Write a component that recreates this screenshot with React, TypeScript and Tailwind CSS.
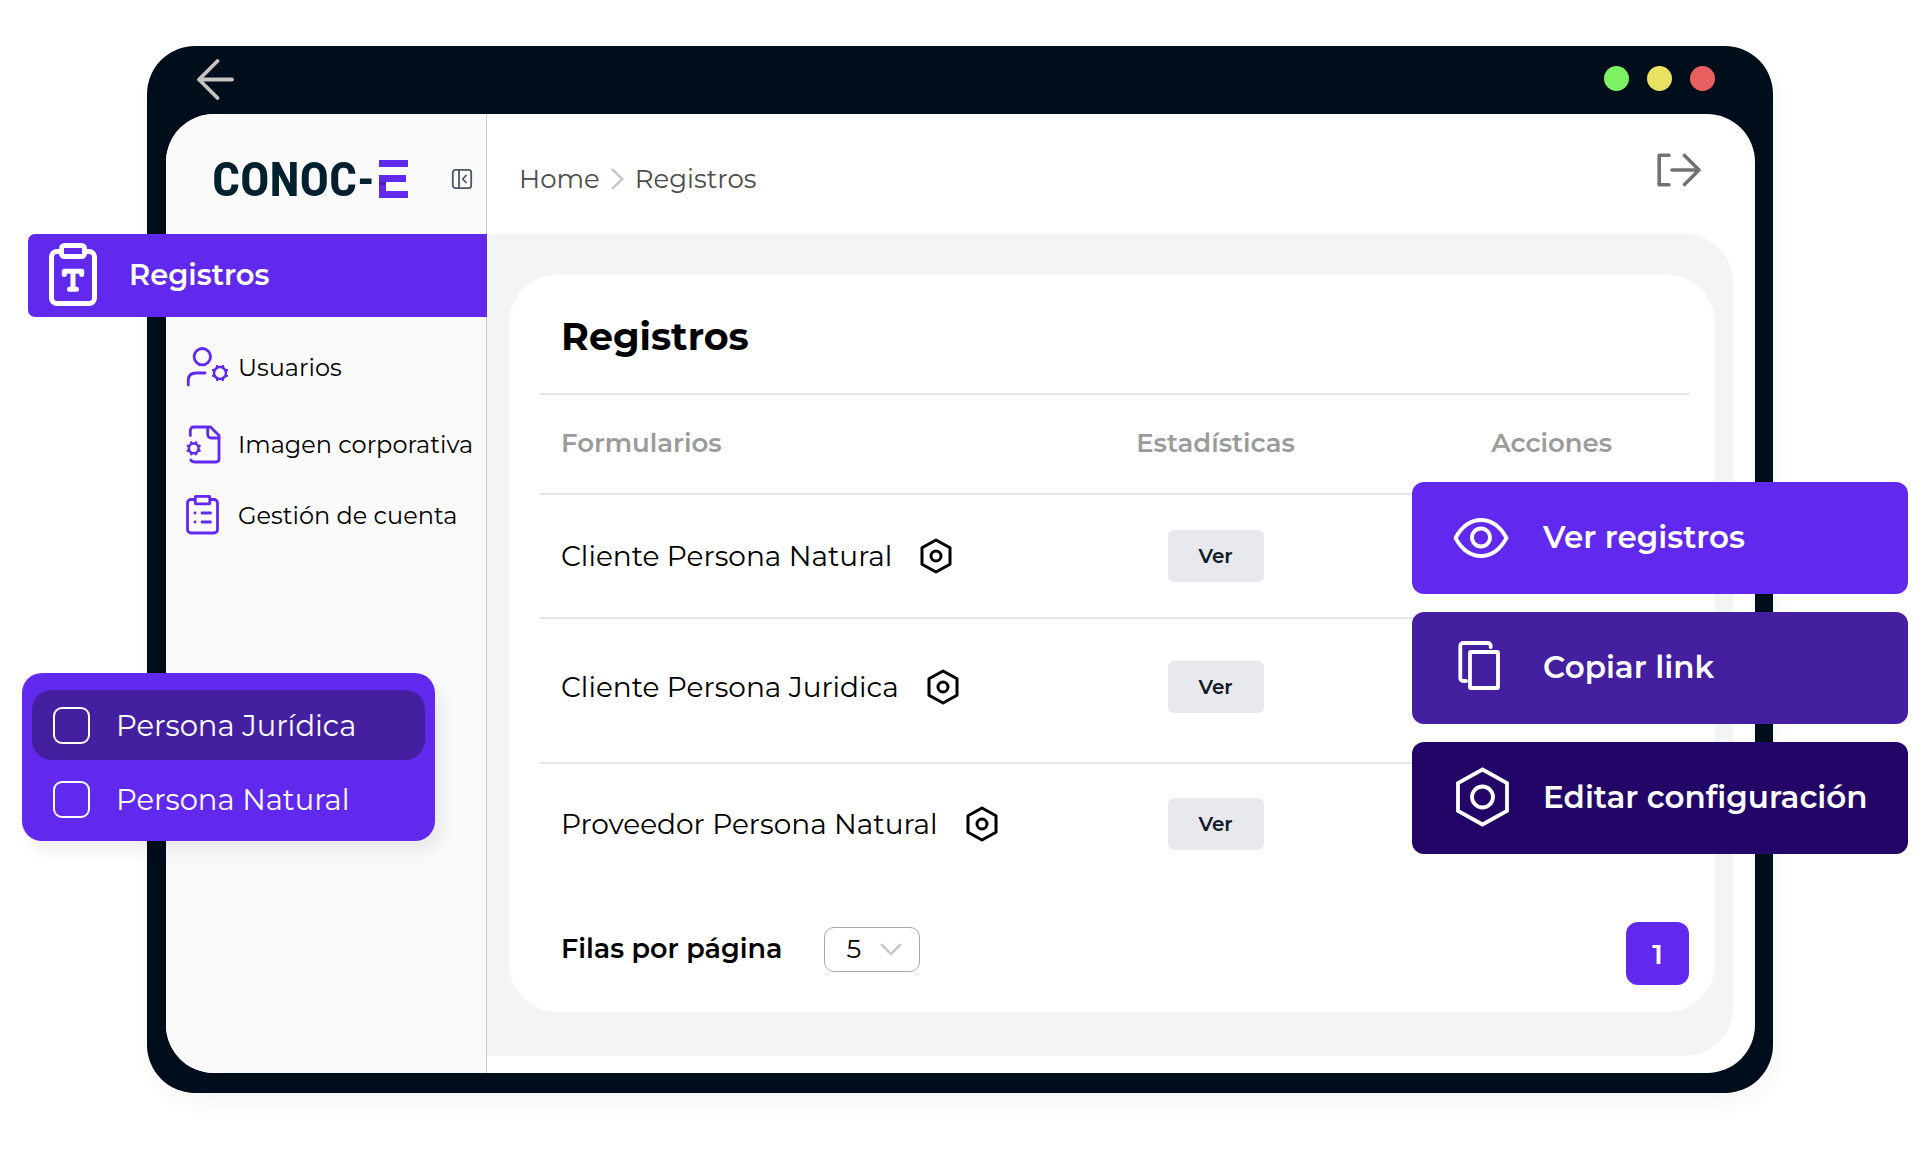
import type { ReactNode } from "react";

const forms = [
    { name: "Cliente Persona Natural", row: "h-[122px]" },
    { name: "Cliente Persona Juridica", row: "h-[143px] pb-2" },
    { name: "Proveedor Persona Natural", row: "h-[120px]" },
];

function Gear({ cx, cy, r }: { cx: number; cy: number; r: number }) {
    return (
        <g strokeWidth="2.5">
            <circle cx={cx} cy={cy} r={r} />
            {[22.5, 67.5, 112.5, 157.5, 202.5, 247.5, 292.5, 337.5].map(a => (
                <path key={a} d={`M${cx} ${cy - r - 0.6}v-0.9`} transform={`rotate(${a} ${cx} ${cy})`} />
            ))}
        </g>
    );
}

function NavIcon({ children }: { children: ReactNode }) {
    return (
        <svg viewBox="0 0 44 42" className="w-11 h-[42px] shrink-0" fill="none" stroke="#6129ee" strokeWidth="2.8" strokeLinecap="round" strokeLinejoin="round" aria-hidden="true">
            {children}
        </svg>
    );
}

function ActionIcon({ children }: { children: ReactNode }) {
    return (
        <svg viewBox="0 0 60 60" className="w-15 h-15 shrink-0" fill="none" stroke="white" strokeWidth="3.8" strokeLinecap="round" strokeLinejoin="round" aria-hidden="true">
            {children}
        </svg>
    );
}

function HexIcon() {
    return (
        <svg viewBox="0 0 32 36" className="w-8 h-9 shrink-0" fill="none" stroke="black" strokeWidth="3" strokeLinejoin="round" aria-hidden="true">
            <path d="M16 2 30 9.8V26.2L16 34 2 26.2V9.8Z" />
            <circle cx="16" cy="18" r="5" />
        </svg>
    );
}

const navItems = [
    {
        label: "Usuarios",
        spacing: "mt-[31px]",
        icon: (
            <NavIcon>
                <circle cx="16.3" cy="9.7" r="8.2" />
                <path d="M2.3 38V33.5Q2.3 26 10 26H19" />
                <Gear cx={34} cy={26} r={6} />
            </NavIcon>
        ),
    },
    {
        label: "Imagen corporativa",
        spacing: "mt-[37px]",
        icon: (
            <NavIcon>
                <path d="M4.3 11.5V7Q4.3 3 8 3H24.5L33 11.5V35Q33 38 30 38H9Q6 38 4.8 36" />
                <path d="M21.7 3.5V10Q21.7 14 25.5 14H33" />
                <Gear cx={7.7} cy={24.3} r={4.9} />
            </NavIcon>
        ),
    },
    {
        label: "Gestión de cuenta",
        spacing: "mt-[31px]",
        icon: (
            <NavIcon>
                <rect x="1.5" y="4.5" width="30" height="33.5" rx="3.5" />
                <rect x="9.3" y="1.4" width="14.5" height="7.4" rx="0.5" fill="#fafafa" />
                <path d="M9 18h.1M16 18h8.5M9 27h.1M16 27h8.5" />
            </NavIcon>
        ),
    },
];

const actions = [
    {
        label: "Ver registros",
        bg: "bg-[#6129ee]",
        icon: (
            <ActionIcon>
                <path d="M4.5 31C10 21 18 13 30 13S50 21 55.5 31C50 41 42 49 30 49S10 41 4.5 31Z" />
                <circle cx="30" cy="30.5" r="9" />
            </ActionIcon>
        ),
    },
    {
        label: "Copiar link",
        bg: "bg-[#441fa0]",
        icon: (
            <ActionIcon>
                <rect x="19" y="15" width="28" height="36" rx="1" />
                <path d="M39.7 10V9a3 3 0 0 0-3-3H12.3a3 3 0 0 0-3 3V41a3 3 0 0 0 3 3H15" />
            </ActionIcon>
        ),
    },
    {
        label: "Editar configuración",
        bg: "bg-[#220566]",
        icon: (
            <ActionIcon>
                <path d="M31.5 2.5 56 16.2V43.8L31.5 57.5 7 43.8V16.2Z" strokeLinejoin="miter" />
                <circle cx="31.5" cy="30" r="10.5" />
            </ActionIcon>
        ),
    },
];

function TitleBar() {
    return (
        <div className="h-[68px] pl-[30px] pr-[40px] pb-[3px] flex items-center justify-between">
            <button type="button" aria-label="Atrás">
                <svg viewBox="0 0 40 42" className="w-10 h-[42px] block" fill="none" stroke="#c6c3c3" strokeWidth="3.8" strokeLinecap="round" strokeLinejoin="round">
                    <path d="M21.5 3 3 21.5 21.5 40M3 21.5H36" />
                </svg>
            </button>
            <div className="flex gap-[18px]">
                <span className="w-[25px] h-[25px] rounded-full bg-[#7cf164]" />
                <span className="w-[25px] h-[25px] rounded-full bg-[#e9e162]" />
                <span className="w-[25px] h-[25px] rounded-full bg-[#e96060]" />
            </div>
        </div>
    );
}

function Logo() {
    return (
        <div className="flex items-center gap-1">
            <span className="font-['Roboto_Condensed',Roboto,sans-serif] font-bold text-[49px] leading-none text-[#02202e]">CONOC-</span>
            <svg viewBox="0 0 29 38" className="w-[29px] h-[38px]" aria-hidden="true">
                <rect width="29" height="7" fill="#6129ee" />
                <rect y="15" width="27" height="7" fill="#6129ee" />
                <rect y="22" width="7" height="9" fill="#4a1cc4" />
                <rect y="25" width="7" height="6" fill="#6129ee" />
                <rect y="31" width="29" height="7" fill="#6129ee" />
            </svg>
        </div>
    );
}

function Sidebar() {
    return (
        <aside className="w-[321px] shrink-0 bg-[#fafafa] border-r border-[#c9cbcc] rounded-l-[48px]">
            <div className="h-[120px] pt-[10px] pl-[46px] pr-[12px] flex items-center justify-between">
                <Logo />
                <button type="button" aria-label="Contraer menú">
                    <svg viewBox="0 0 24 24" className="w-6 h-6 block" fill="none" stroke="#4b5563" strokeWidth="1.8" strokeLinecap="round" strokeLinejoin="round">
                        <rect x="2.8" y="2.8" width="18.4" height="18.4" rx="2.6" />
                        <path d="M9 3v18M16 8.5 12.7 12 16 15.5" />
                    </svg>
                </button>
            </div>
            <nav>
                <a href="#registros" className="relative -ml-[138px] -mr-px h-[83px] pl-[21px] pb-0.5 flex items-center gap-[32px] rounded-l-[7px] bg-[#6129ee] text-white text-[29px] font-semibold">
                    <svg viewBox="0 0 48 63" className="w-12 h-[63px] shrink-0" fill="none" stroke="white" strokeWidth="5" strokeLinecap="round" strokeLinejoin="round" aria-hidden="true">
                        <rect x="2.5" y="8.5" width="43" height="52" rx="5.5" />
                        <rect x="12.5" y="2.5" width="23" height="11" rx="3" fill="#6129ee" />
                        <path d="M15.3 31.5V28.2H32.7V31.5M24 28.2V46.2M20.5 46.2H27.5" />
                    </svg>
                    Registros
                </a>
                {navItems.map(item => (
                    <a key={item.label} href="#" className={`h-10 pl-5 flex items-center gap-2 text-2xl whitespace-nowrap text-black ${item.spacing}`}>
                        {item.icon}
                        {item.label}
                    </a>
                ))}
            </nav>
        </aside>
    );
}

function FormsTable() {
    return (
        <table className="w-full table-fixed">
            <colgroup>
                <col className="w-[41.5%]" />
                <col className="w-[34.6%]" />
                <col />
            </colgroup>
            <thead>
                <tr className="h-[99px] border-b-2 border-[#e5e5e5] text-[26px] text-[#9b9b9b]">
                    <th className="pl-[21px] pb-0.5 text-left font-semibold">Formularios</th>
                    <th className="pb-0.5 font-semibold">Estadísticas</th>
                    <th className="pb-0.5 font-semibold">Acciones</th>
                </tr>
            </thead>
            <tbody>
                {forms.map(form => (
                    <tr key={form.name} className="border-b-2 border-[#e5e5e5] last:border-b-0">
                        <td className="pl-[21px]">
                            <div className={`flex items-center gap-7 text-[28px] whitespace-nowrap ${form.row}`}>
                                {form.name}
                                <HexIcon />
                            </div>
                        </td>
                        <td>
                            <div className={`flex items-center justify-center ${form.row}`}>
                                <button type="button" className="w-24 h-[52px] rounded-md bg-[#e8e9ed] text-xl font-semibold text-[#111827]">Ver</button>
                            </div>
                        </td>
                        <td />
                    </tr>
                ))}
            </tbody>
        </table>
    );
}

function Pagination() {
    return (
        <div className="pt-[38px] pl-[21px] flex items-center justify-between">
            <div className="flex items-center gap-[42px] pb-2">
                <label htmlFor="rows" className="text-[27px] font-semibold">Filas por página</label>
                <div className="relative">
                    <select id="rows" defaultValue="5" className="appearance-none block w-24 h-[45px] pl-[21px] rounded-[10px] border border-[#a8a8a8] bg-white text-[26px]">
                        <option>5</option>
                        <option>10</option>
                        <option>20</option>
                    </select>
                    <svg viewBox="0 0 22 14" className="absolute right-[18px] top-4 w-[22px] h-[14px] pointer-events-none" fill="none" stroke="#c8c8c8" strokeWidth="2.6" strokeLinecap="round" strokeLinejoin="round" aria-hidden="true">
                        <path d="M1.8 1.8 11 11.2 20.2 1.8" />
                    </svg>
                </div>
            </div>
            <button type="button" className="w-[63px] h-[63px] rounded-xl bg-[#6129ee] text-white text-[28px] font-semibold">1</button>
        </div>
    );
}

function Content() {
    return (
        <div className="flex-1 min-w-0">
            <header className="h-[120px] pl-8 pr-[53px] flex items-center justify-between">
                <nav aria-label="Ruta" className="pt-[10px] flex items-center gap-[11px] text-[26px] text-[#4b4b4b]">
                    <a href="#home">Home</a>
                    <svg viewBox="0 0 13 22" className="w-[13px] h-[22px]" fill="none" stroke="#c8c8c8" strokeWidth="2.6" strokeLinecap="round" strokeLinejoin="round" aria-hidden="true">
                        <path d="M1.6 1.6 11.2 11 1.6 20.4" />
                    </svg>
                    <a href="#registros">Registros</a>
                </nav>
                <button type="button" aria-label="Cerrar sesión" className="pb-2">
                    <svg viewBox="0 0 46 34" className="w-[46px] h-[34px] block" fill="none" stroke="#727272" strokeWidth="3.6" strokeLinecap="round" strokeLinejoin="round">
                        <path d="M13 2.2H3.2V31.8H13M16 17H43M28.5 2.5 43 17 28.5 31.5" />
                    </svg>
                </button>
            </header>
            <main className="mr-[22px] mb-[17px] pt-[41px] pr-[18px] pb-[44px] pl-[22px] bg-gray-100 rounded-r-[48px]">
                <section className="pl-[31px] pr-[26px] pb-[27px] rounded-[48px] bg-white">
                    <div className="h-[120px] pl-[21px] pt-1 flex items-center border-b-2 border-[#e5e5e5]">
                        <h1 className="text-[38px] font-bold">Registros</h1>
                    </div>
                    <FormsTable />
                    <Pagination />
                </section>
            </main>
        </div>
    );
}

export default function App() {
    return (
        <div className="min-h-screen bg-white px-[147px] pt-[46px] pb-[75px] overflow-x-hidden font-[Montserrat,'Open_Sans',sans-serif] text-black">
            <div className="relative pl-[19px] pr-[18px] pb-5 rounded-[48px] bg-[#000d1a] shadow-[4px_10px_20px_rgba(0,0,0,0.04)]">
                <TitleBar />
                <div className="flex rounded-[48px] bg-white">
                    <Sidebar />
                    <Content />
                </div>

                {/* person type filter, floats over the sidebar */}
                <fieldset className="absolute -left-[125px] top-[627px] w-[413px] px-[10px] pt-[17px] pb-[7px] flex flex-col gap-1 rounded-[20px] bg-[#6129ee] text-white text-[29px] shadow-[7px_10px_16px_rgba(0,0,0,0.07)]">
                    <label className="h-[70px] px-[21px] pt-px flex items-center gap-[26px] rounded-[20px] bg-[#441fa0]">
                        <input type="checkbox" className="appearance-none w-[37px] h-[37px] rounded-[9px] border-2 border-white" />
                        Persona Jurídica
                    </label>
                    <label className="h-[70px] px-[21px] pt-px flex items-center gap-[26px] rounded-[20px]">
                        <input type="checkbox" className="appearance-none w-[37px] h-[37px] rounded-[9px] border-2 border-white" />
                        Persona Natural
                    </label>
                </fieldset>

                {/* row actions menu */}
                <div className="absolute -right-[135px] top-[436px] w-[496px] flex flex-col gap-[18px]">
                    {actions.map(action => (
                        <button key={action.label} type="button" className={`h-28 pl-[39px] pb-0.5 flex items-center gap-8 rounded-xl text-white text-[31px] font-semibold whitespace-nowrap ${action.bg}`}>
                            {action.icon}
                            {action.label}
                        </button>
                    ))}
                </div>
            </div>
        </div>
    );
}
